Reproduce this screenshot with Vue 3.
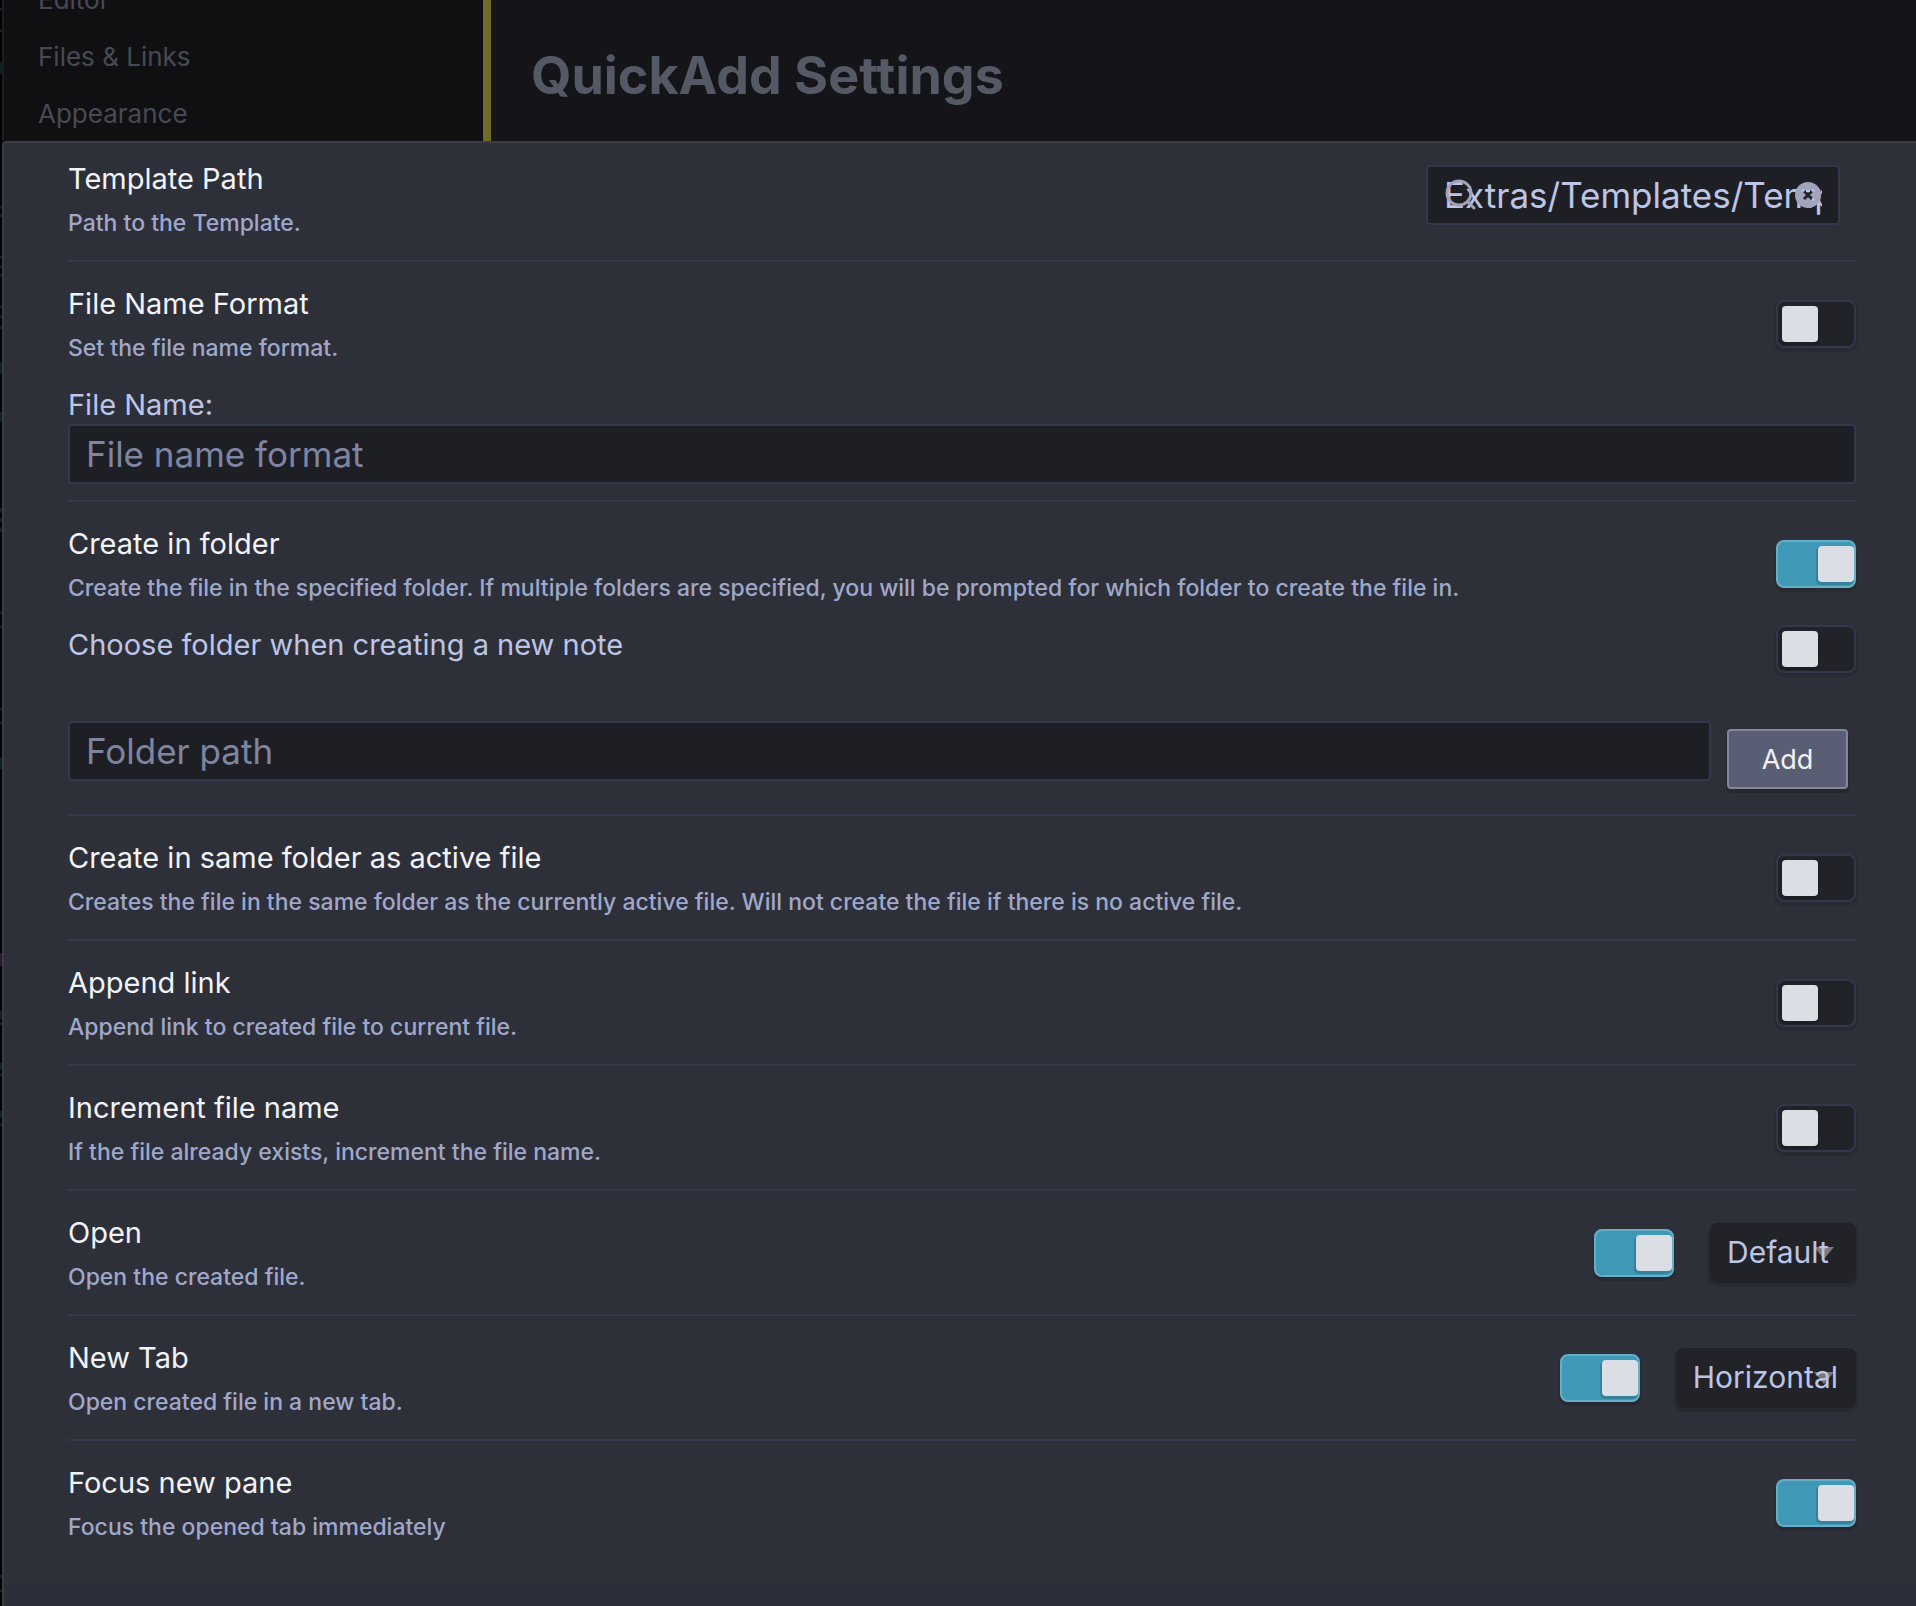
<script setup>
import { reactive } from 'vue'

const tabs = ['Editor', 'Files & Links', 'Appearance']

const settings = reactive({
  templatePath: 'Extras/Templates/Template.md',
  useFormat: false,
  format: '',
  useFolder: true,
  chooseFolder: false,
  folder: '',
  sameFolder: false,
  appendLink: false,
  increment: false,
  open: true,
  openMode: 'Default',
  newTab: true,
  direction: 'Horizontal',
  focus: true,
})

const simpleRows = [
  {
    key: 'sameFolder',
    name: 'Create in same folder as active file',
    desc: 'Creates the file in the same folder as the currently active file. Will not create the file if there is no active file.',
  },
  { key: 'appendLink', name: 'Append link', desc: 'Append link to created file to current file.' },
  { key: 'increment', name: 'Increment file name', desc: 'If the file already exists, increment the file name.' },
]

const selectRows = [
  { key: 'open', name: 'Open', desc: 'Open the created file.', choice: 'openMode', options: ['Default', 'Source', 'Preview'] },
  { key: 'newTab', name: 'New Tab', desc: 'Open created file in a new tab.', choice: 'direction', options: ['Horizontal', 'Vertical'] },
]

// Slivers of the note text showing left of the window: [top, height]
const slivers = [
  [8, 3], [29, 3], [62, 12], [206, 3], [214, 3], [256, 3], [265, 3], [274, 3], [305, 3], [315, 3], [326, 3],
  [362, 12], [412, 10], [508, 5], [518, 4], [527, 5], [611, 3], [625, 3], [708, 3], [721, 3], [757, 12],
  [1011, 8], [1022, 3], [1063, 7], [1073, 3], [1111, 7], [1123, 3], [1575, 3], [1589, 3],
]
</script>

<template>
  <div class="page">
    <svg class="behind" width="2" height="1606" aria-hidden="true">
      <rect v-for="s in slivers" :key="s[0]" x="0" :y="s[0]" width="2" :height="s[1]" fill="#0c2227" />
      <rect x="0" y="953" width="2" height="13" fill="#2a1a3a" />
    </svg>

    <div class="window">
      <header class="backdrop">
        <nav class="tabs">
          <a v-for="tab in tabs" :key="tab" href="#">{{ tab }}</a>
        </nav>
        <div class="pane">
          <h1>QuickAdd Settings</h1>
        </div>
      </header>

      <main class="modal">
        <section class="group">
          <div class="row">
            <div class="info">
              <label class="name" for="template-path">Template Path</label>
              <p class="desc">Path to the Template.</p>
            </div>
            <div class="search">
              <input id="template-path" v-model="settings.templatePath" class="text" type="text" />
              <svg class="glass" width="32" height="32" viewBox="0 0 32 32" aria-hidden="true">
                <circle cx="15" cy="14" r="12" fill="none" stroke="#a0a4b8" stroke-width="3" />
                <path d="M24 23l6 6" stroke="#a0a4b8" stroke-width="3" stroke-linecap="round" />
              </svg>
              <button class="clear" type="button" aria-label="Clear">
                <svg width="26" height="26" viewBox="0 0 26 26">
                  <circle cx="13" cy="13" r="13" fill="#a0a5bb" />
                  <path d="M9 9l8 8M17 9l-8 8" stroke="#22242b" stroke-width="3" />
                  <path d="M6.500 7.500h3v2h-3zM16.500 7.500h3v2h-3zM17 16h2v3h-2zM11 8h4v2h-4z" fill="#bcc5e6" />
                </svg>
              </button>
            </div>
          </div>
        </section>

        <section class="group">
          <div class="row">
            <div class="info">
              <label class="name" for="use-format">File Name Format</label>
              <p class="desc">Set the file name format.</p>
            </div>
            <input id="use-format" v-model="settings.useFormat" class="toggle" type="checkbox" />
          </div>
          <label class="caption" for="format">File Name:</label>
          <input id="format" v-model="settings.format" class="text format" type="text" placeholder="File name format" />
        </section>

        <section class="group">
          <div class="row">
            <div class="info">
              <label class="name" for="use-folder">Create in folder</label>
              <p class="desc">
                Create the file in the specified folder. If multiple folders are specified, you will be prompted for which folder to create the file in.
              </p>
            </div>
            <input id="use-folder" v-model="settings.useFolder" class="toggle" type="checkbox" />
          </div>
          <div class="choose">
            <label class="caption" for="choose-folder">Choose folder when creating a new note</label>
            <input id="choose-folder" v-model="settings.chooseFolder" class="toggle" type="checkbox" />
          </div>
          <div class="folder">
            <input v-model="settings.folder" class="text" type="text" placeholder="Folder path" aria-label="Folder path" />
            <button class="add" type="button">Add</button>
          </div>
        </section>

        <section v-for="row in simpleRows" :key="row.key" class="group">
          <div class="row">
            <div class="info">
              <label class="name" :for="row.key">{{ row.name }}</label>
              <p class="desc">{{ row.desc }}</p>
            </div>
            <input :id="row.key" v-model="settings[row.key]" class="toggle" type="checkbox" />
          </div>
        </section>

        <section v-for="row in selectRows" :key="row.key" class="group">
          <div class="row">
            <div class="info">
              <label class="name" :for="row.key">{{ row.name }}</label>
              <p class="desc">{{ row.desc }}</p>
            </div>
            <div class="controls">
              <input :id="row.key" v-model="settings[row.key]" class="toggle" type="checkbox" />
              <div class="dropdown">
                <svg class="arrow" width="20" height="12" viewBox="0 0 20 12" aria-hidden="true">
                  <path d="M0 0h20L10 12z" fill="#77787c" />
                </svg>
                <select v-model="settings[row.choice]" :aria-label="row.name + ' mode'">
                  <option v-for="o in row.options" :key="o">{{ o }}</option>
                </select>
              </div>
            </div>
          </div>
        </section>

        <section class="group">
          <div class="row">
            <div class="info">
              <label class="name" for="focus-pane">Focus new pane</label>
              <p class="desc">Focus the opened tab immediately</p>
            </div>
            <input id="focus-pane" v-model="settings.focus" class="toggle" type="checkbox" />
          </div>
        </section>
      </main>
    </div>
  </div>
</template>

<style>
body {
  margin: 0;
  background: #020305;
}
</style>

<style scoped>
.page {
  position: relative;
  min-height: 100vh;
  overflow: hidden;
  background: #020305;
  color: #bcc5e6;
  font-family: Inter, "Liberation Sans", sans-serif;
  font-size: 29px;
}

.page * {
  box-sizing: border-box;
}

.behind {
  position: absolute;
  top: 0;
  left: 0;
}

.window {
  display: flex;
  flex-direction: column;
  min-height: 100vh;
  margin-left: 2px;
}

.backdrop {
  display: flex;
  height: 141px;
  overflow: hidden;
}

.tabs {
  display: flex;
  flex: none;
  flex-direction: column;
  justify-content: flex-end;
  width: 489px;
  padding: 0 34px;
  background: #101012;
  border-left: 2px solid #1c1c20;
  border-right: 8px solid #6e6c2b;
}

.tabs a {
  flex: none;
  height: 57px;
  color: #474a55;
  font-size: 26px;
  line-height: 59px;
  text-decoration: none;
}

.pane {
  display: flex;
  flex: 1;
  align-items: center;
  padding: 10px 40px 0;
  background: #151419;
}

h1 {
  margin: 0;
  color: #555965;
  font-size: 52px;
  font-weight: 700;
  line-height: 64px;
}

.modal {
  flex: 1;
  padding: 0 60px 0 64px;
  background: linear-gradient(#2e3039, #2e3039 96%, #2c2e39);
  border: solid #3b3b43;
  border-width: 2px 0 0 2px;
  border-top-left-radius: 4px;
}

.group {
  border-top: 2px solid #34384c;
}

.group:first-child {
  border-top: 0;
}

.row {
  display: flex;
  align-items: center;
  justify-content: space-between;
  padding: 23px 0 22px;
}

.group:first-child .row {
  padding-top: 17px;
}

.name {
  display: block;
  color: #f2f3f7;
  line-height: 38px;
}

.desc {
  margin: 10px 0 0;
  color: #9fa8ca;
  font-size: 23px;
  font-weight: 500;
  line-height: 30px;
}

.caption {
  display: block;
  line-height: 39px;
}

.text {
  display: block;
  width: 100%;
  height: 60px;
  padding: 0 16px;
  color: #bcc5e6;
  font-family: inherit;
  font-size: 35px;
  background: #1e1f24;
  border: 2px solid #33374b;
  border-radius: 4px;
  outline: none;
}

.text::placeholder {
  color: #7e85a1;
  opacity: 1;
}

.format {
  margin-bottom: 16px;
}

.search {
  position: relative;
  width: 414px;
  margin: 0 16px 8px 0;
}

.glass {
  position: absolute;
  top: 14px;
  left: 18px;
}

.clear {
  position: absolute;
  top: 17px;
  right: 19px;
  width: 26px;
  height: 26px;
  padding: 0;
  background: none;
  border: 0;
}

.clear svg {
  display: block;
}

.toggle {
  display: flex;
  flex: none;
  align-items: center;
  width: 80px;
  height: 48px;
  margin: 0;
  padding-left: 4px;
  appearance: none;
  background: #222328;
  border: 2px solid #33374b;
  border-radius: 8px;
  box-shadow: 0 2px 0 2px #282a31;
}

.toggle::before {
  width: 36px;
  height: 36px;
  content: "";
  background: #dcdee6;
  border-radius: 4px;
  box-shadow: 0 2px 0 1px #1d1e22;
}

.toggle:checked {
  justify-content: flex-end;
  padding-left: 0;
  background: #3e98b6;
  border-color: #66afc7;
  box-shadow: 0 3px 0 1px #282a31;
}

.toggle:checked::before {
  box-shadow: -1px 2px 0 1px #35829b;
}

.choose {
  display: flex;
  align-items: flex-start;
  justify-content: space-between;
}

.folder {
  display: flex;
  gap: 16px;
  align-items: flex-start;
  padding: 48px 8px 25px 0;
}

.folder .text {
  flex: 1;
}

.add {
  width: 121px;
  height: 60px;
  margin-top: 8px;
  color: #f0f1f6;
  font-family: inherit;
  font-size: 27px;
  background: #5a5e74;
  border: 2px solid #83879a;
  border-radius: 4px;
  box-shadow: 0 3px 0 1px #26282f;
}

.controls {
  display: flex;
  gap: 36px;
  align-items: center;
}

.dropdown {
  position: relative;
  background: #222328;
  border-radius: 8px;
  box-shadow: 0 2px 0 2px #282a31;
}

.arrow {
  position: absolute;
  top: 24px;
  right: 22px;
}

.dropdown select {
  position: relative;
  display: block;
  min-width: 146px;
  height: 60px;
  padding: 0 18px 3px 17px;
  color: #bcc5e6;
  font-family: inherit;
  font-size: 30px;
  appearance: none;
  field-sizing: content;
  background: transparent;
  border: 0;
  outline: none;
}
</style>
